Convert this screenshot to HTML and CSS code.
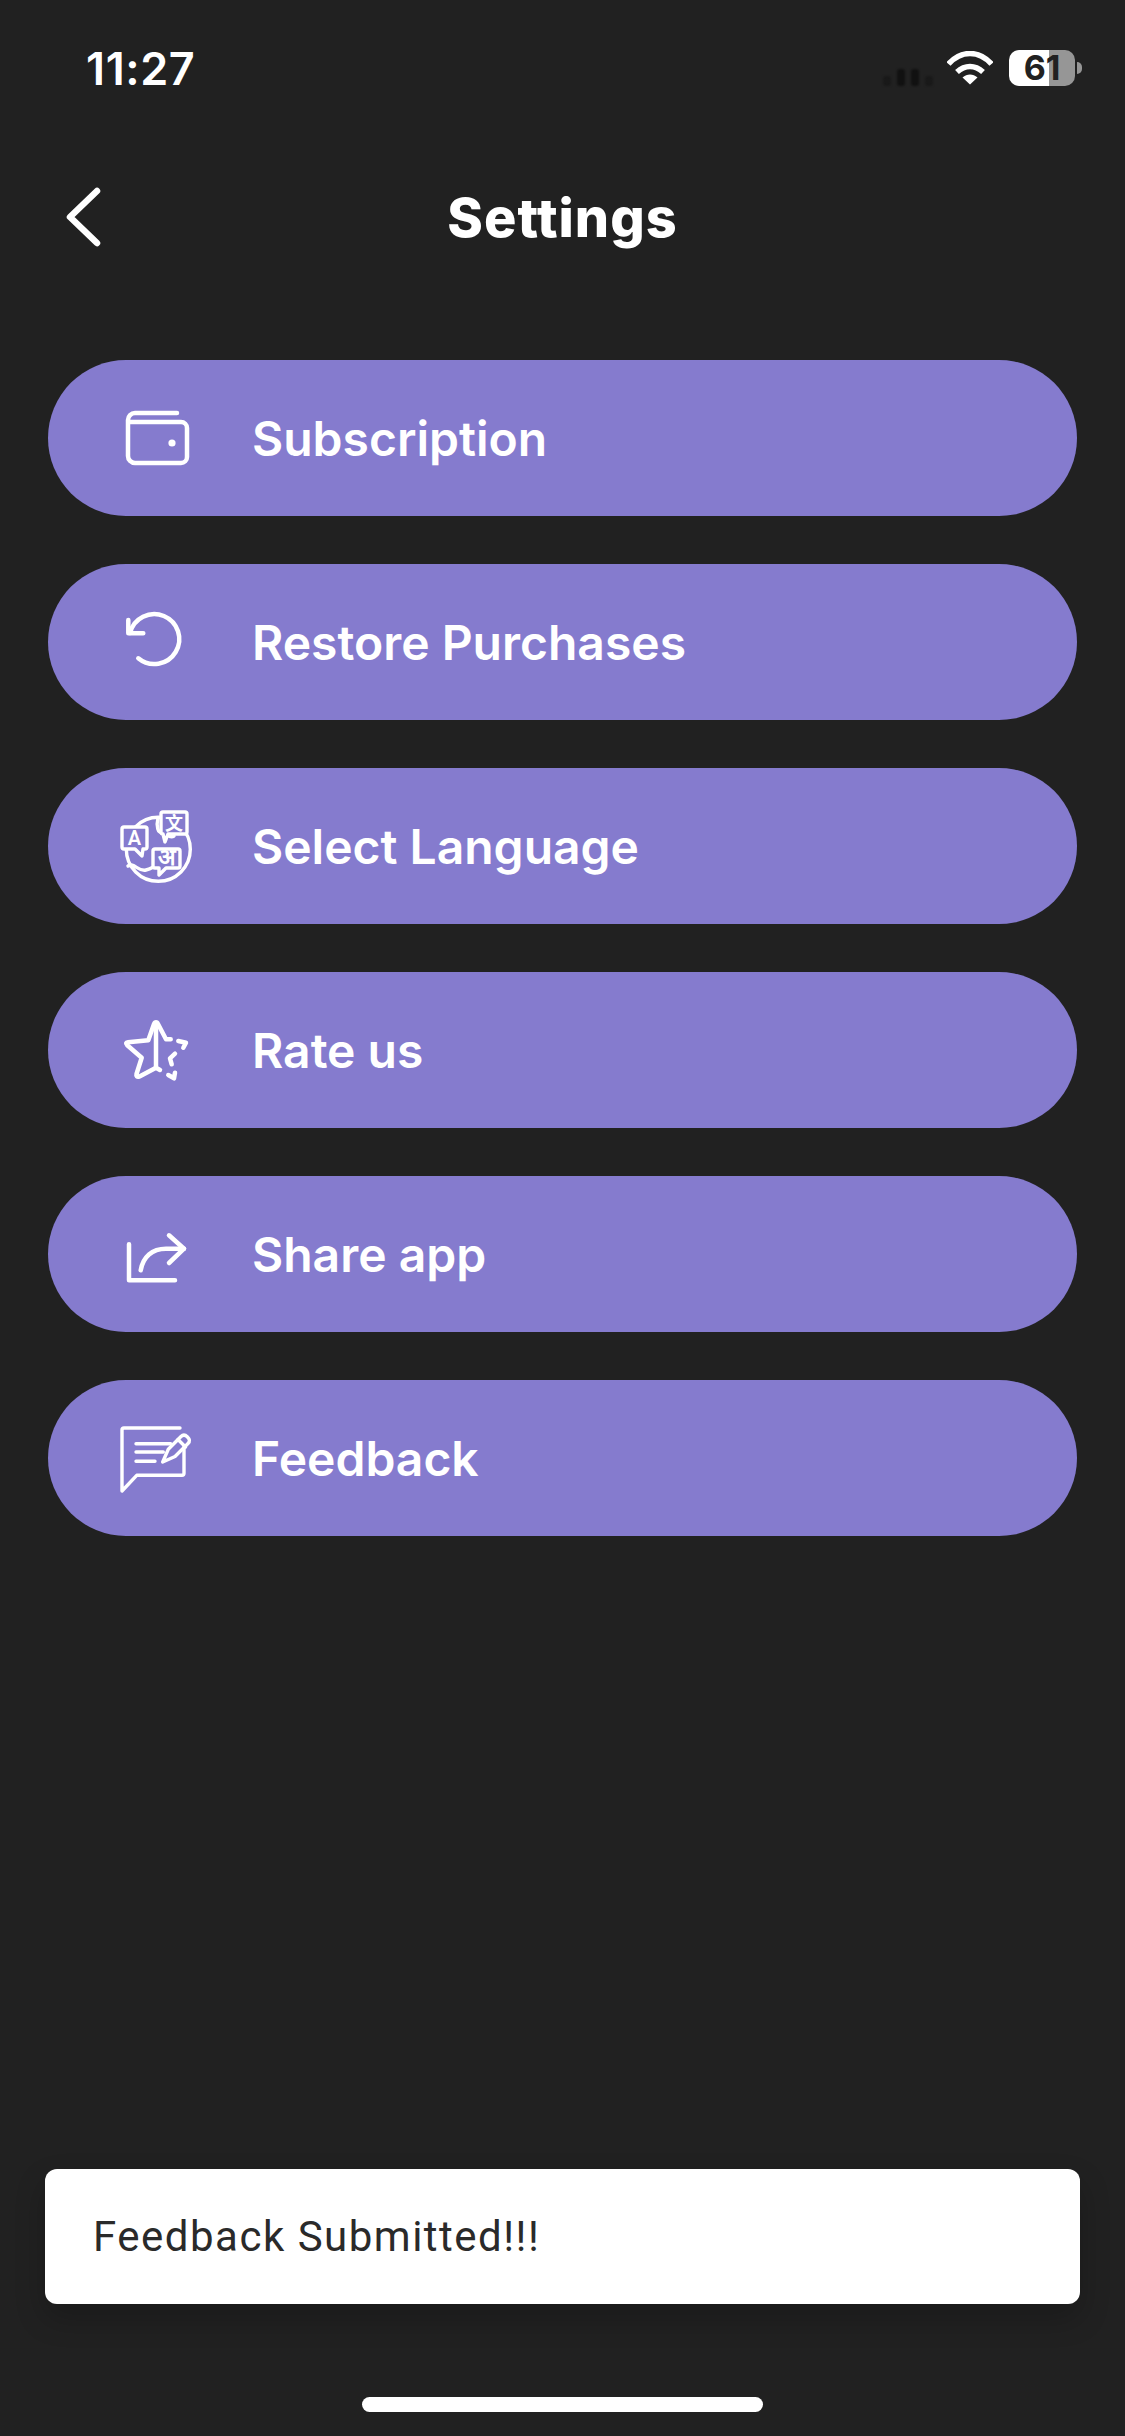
FILE: index.html
```html
<!DOCTYPE html>
<html lang="en">
<head>
    <meta charset="UTF-8">
    <meta name="viewport" content="width=device-width, initial-scale=1.0">
    <title>Settings</title>
    <link rel="stylesheet" href="styles.css">
</head>
<body>
    <div class="screen">
        <div class="status-bar">
            <span class="time">11:27</span>
            <div class="status-icons">
                <div class="signal">
                    <span class="bar bar-dim"></span>
                    <span class="bar bar-tall"></span>
                    <span class="bar bar-tall"></span>
                    <span class="bar bar-dim"></span>
                </div>
                <svg class="wifi" viewBox="0 0 46 34">
                    <path d="M1.5 13C14 -1 32 -1 44.5 13" />
                    <path d="M10 21C18 13.5 28 13.5 36 21" />
                    <path class="wifi-dot" d="M23 33.5L15.5 26.5C20 22.5 26 22.5 30.5 26.5Z" />
                </svg>
                <div class="battery">
                    <span class="battery-level">61</span>
                </div>
                <span class="battery-nub"></span>
            </div>
        </div>

        <header class="top-bar">
            <svg class="back" viewBox="0 0 40 64">
                <path d="M33 6L6 32L33 58" />
            </svg>
            <h1>Settings</h1>
        </header>

        <div class="menu">
            <div class="menu-item">
                <svg class="icon" viewBox="0 0 80 80">
                    <path d="M61 15H19a7 7 0 0 0-7 7v36a7 7 0 0 0 7 7H65a6 6 0 0 0 6-6V30a6 6 0 0 0-6-6H13" />
                    <circle class="solid" cx="56" cy="45" r="3.6" />
                </svg>
                <span>Subscription</span>
            </div>
            <div class="menu-item">
                <svg class="icon" viewBox="0 0 80 80">
                    <path d="M22.3 56.3A25 25 0 1 0 14 31" />
                    <path d="M12.3 18V31.3H27.3" />
                </svg>
                <span>Restore Purchases</span>
            </div>
            <div class="menu-item">
                <svg class="icon icon-thin" viewBox="0 0 80 80">
                    <circle cx="42.3" cy="43.3" r="32" />
                    <path d="M12 60C18 56 22 66 30 64S36 60 40 61" />
                    <path d="M42 12C40 20 42 28 46 26S52 34 58 30" />
                    <path class="bubble" d="M8 21H29a2 2 0 0 1 2 2V41a2 2 0 0 1-2 2H27L26 50L19 43H8a2 2 0 0 1-2-2V23a2 2 0 0 1 2-2Z" />
                    <path class="bubble" d="M47 6H69a2 2 0 0 1 2 2V26a2 2 0 0 1-2 2H52L49 36L47 28A2 2 0 0 1 45 26V8a2 2 0 0 1 2-2Z" />
                    <path class="bubble" d="M39 43H62a2 2 0 0 1 2 2V60a2 2 0 0 1-2 2H50L43 69V62H39a2 2 0 0 1-2-2V45a2 2 0 0 1 2-2Z" />
                    <text class="glyph" x="18.5" y="38.5">A</text>
                    <text class="glyph glyph-cjk" x="58" y="23.5">文</text>
                    <text class="glyph glyph-small" x="50.5" y="59">अ</text>
                </svg>
                <span>Select Language</span>
            </div>
            <div class="menu-item">
                <svg class="icon" viewBox="0 0 80 80">
                    <path d="M40 57.7L23.5 66.5C21 67.5 20 66 20.5 64L25.7 47.7L11 35C9.5 33.5 10 32.5 12 32.3L32.3 30.3L38 14C39 11.5 41 11.5 42 14L50 29.3H54.7" />
                    <path d="M40 13V57.7L44 60" />
                    <path d="M62.3 31L70 32.7L67.3 37.7" />
                    <path d="M59 43.7L54 48.3L55.7 54.3" />
                    <path d="M52.3 65L58 68.3L59 62.7" />
                </svg>
                <span>Rate us</span>
            </div>
            <div class="menu-item">
                <svg class="icon" viewBox="0 0 80 80">
                    <path d="M13 30.3V66.3H59" />
                    <path d="M24.7 56.3C27 43 36 34.7 50 34.7H68" />
                    <path d="M53 21.3L68 34.7L53 49" />
                </svg>
                <span>Share app</span>
            </div>
            <div class="menu-item">
                <svg class="icon icon-thin" viewBox="0 0 80 80">
                    <path d="M64 10H8a2 2 0 0 0-2 2V73L20.7 57.3H66a2 2 0 0 0 2-2V29" />
                    <path d="M20 25.7H54.7M20 34H47.3M20 43.3H39" />
                    <path d="M46.7 44L52.3 31.3L65 18.5C67 16.5 69 16.5 71.5 19C74 21.5 74 23.5 72 25.5L59 38.5Z" />
                    <path d="M62 21.5L69.5 29" />
                </svg>
                <span>Feedback</span>
            </div>
        </div>

        <div class="toast">Feedback Submitted!!!</div>
        <div class="home-bar"></div>
    </div>
</body>
</html>
```

FILE: styles.css
```css
* {
    box-sizing: border-box;
}

body {
    margin: 0;
    background-color: #212121;
    font-family: 'Inter', sans-serif;
    color: #fff;
}

.screen {
    height: 2436px;
    display: flex;
    flex-direction: column;
    overflow: hidden;
}

/* status bar */
.status-bar {
    height: 90px;
    padding: 46px 43px 0 86px;
    display: flex;
    justify-content: space-between;
    align-items: center;
}

.time {
    font-size: 45px;
    font-weight: 600;
    letter-spacing: 0.6px;
    line-height: 48px;
    margin-top: 1px;
}

.status-icons {
    display: flex;
    align-items: center;
}

.signal {
    display: flex;
    align-items: flex-end;
    gap: 6px;
    height: 18px;
    margin: 18px 14px 0 0;
    filter: blur(1px);
}

.bar {
    width: 8px;
    height: 17px;
    border-radius: 3px;
    background-color: #111;
}

.bar-dim {
    height: 10px;
    background-color: #191919;
}

.wifi {
    width: 46px;
    height: 34px;
    margin-right: 16px;
    fill: none;
    stroke: #fff;
    stroke-width: 5.5;
}

.wifi .wifi-dot {
    fill: #fff;
    stroke: none;
}

.battery {
    width: 66px;
    height: 36px;
    border-radius: 10px;
    background: linear-gradient(to right, #fff 40px, #969696 40px);
    text-align: center;
}

.battery-level {
    display: block;
    font-size: 34px;
    font-weight: 700;
    line-height: 36px;
    color: #212121;
}

.battery-nub {
    width: 5px;
    height: 12px;
    margin-left: 2px;
    border-radius: 0 6px 6px 0;
    background-color: #969696;
}

/* header */
.top-bar {
    height: 100px;
    margin-top: 76px;
    display: grid;
    grid-template-columns: 1fr auto 1fr;
    align-items: center;
    padding-left: 64px;
}

.back {
    width: 40px;
    height: 64px;
    margin-top: 2px;
    fill: none;
    stroke: #fff;
    stroke-width: 6.5;
    stroke-linecap: round;
    stroke-linejoin: round;
}

.top-bar h1 {
    margin: 4px 0 0 -64px;
    font-size: 54px;
    font-weight: 800;
    letter-spacing: 1px;
    line-height: 60px;
}

/* menu */
.menu {
    margin: 94px 48px 0;
    display: flex;
    flex-direction: column;
    gap: 48px;
}

.menu-item {
    height: 156px;
    padding-left: 68px;
    display: flex;
    align-items: center;
    gap: 56px;
    border-radius: 78px;
    background-color: #857bce;
    font-size: 48px;
    font-weight: 600;
}

.icon {
    width: 80px;
    height: 80px;
    flex-shrink: 0;
    fill: none;
    stroke: #fff;
    stroke-width: 4.5;
    stroke-linecap: round;
    stroke-linejoin: round;
}

.icon-thin {
    stroke-width: 3.4;
}

.icon .solid {
    fill: #fff;
    stroke: none;
}

.icon .bubble {
    fill: #857bce;
}

.glyph {
    fill: #fff;
    stroke: none;
    font-family: 'Roboto', sans-serif;
    font-size: 20px;
    text-anchor: middle;
}

.glyph-cjk {
    font-family: 'Noto Sans CJK SC', sans-serif;
    font-size: 18px;
}

.glyph-small {
    font-size: 23px;
}

/* toast and home indicator */
.toast {
    margin: auto 45px 0;
    height: 135px;
    padding-left: 48px;
    display: flex;
    align-items: center;
    border-radius: 12px;
    background-color: #fff;
    box-shadow: 0 14px 30px rgba(0, 0, 0, 0.22);
    color: #2a2a2a;
    font-family: 'Roboto', sans-serif;
    font-size: 42px;
    letter-spacing: 1.5px;
}

.home-bar {
    width: 401px;
    height: 15px;
    margin: 93px auto 24px;
    border-radius: 8px;
    background-color: #fff;
}
```
